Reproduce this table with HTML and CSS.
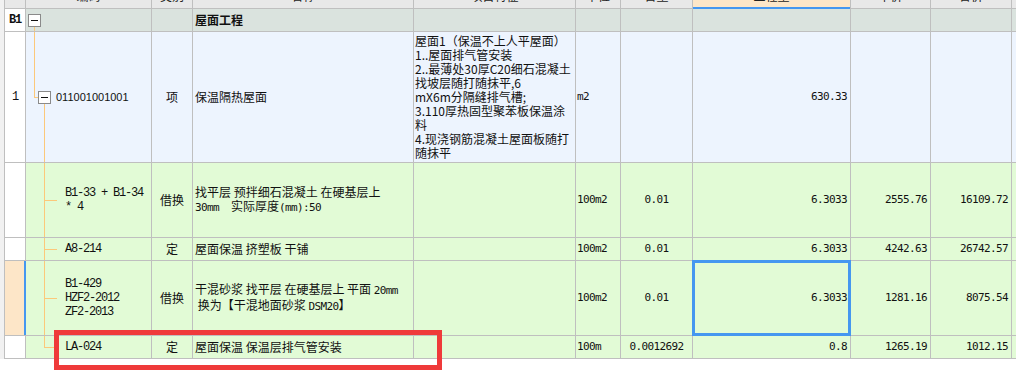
FILE: index.html
```html
<!DOCTYPE html>
<html lang="zh-CN">
<head>
<meta charset="utf-8">
<title>屋面工程</title>
<link rel="stylesheet" href="styles.css">
</head>
<body>
<div class="sheet">
  <div class="row head">
    <div class="c"></div>
    <div class="c ctr">编码</div>
    <div class="c ctr">类别</div>
    <div class="c ctr">名称</div>
    <div class="c ctr">项目特征</div>
    <div class="c ctr">单位</div>
    <div class="c ctr">含量</div>
    <div class="c ctr sel-head">工程量</div>
    <div class="c ctr">单价</div>
    <div class="c ctr">合价</div>
    <div class="c"></div>
  </div>

  <div class="row grp h22">
    <div class="c idx bold">B1</div>
    <div class="c tree-b1"><span class="box"></span></div>
    <div class="c"></div>
    <div class="c name strong">屋面工程</div>
    <div class="c"></div>
    <div class="c"></div>
    <div class="c"></div>
    <div class="c"></div>
    <div class="c"></div>
    <div class="c"></div>
    <div class="c"></div>
  </div>

  <div class="row item h130">
    <div class="c idx">1</div>
    <div class="c tree-item"><span class="box"></span><span class="bill">011001001001</span></div>
    <div class="c ctr">项</div>
    <div class="c name">保温隔热屋面</div>
    <div class="c desc"><div class="t">屋面1（保温不上人平屋面）<br>1..屋面排气管安装<br>2..最薄处30厚C20细石混凝土<br>找坡层随打随抹平,6<br>mX6m分隔缝排气槽;<br>3.110厚热固型聚苯板保温涂<br>料<br>4.现浇钢筋混凝土屋面板随打<br>随抹平</div></div>
    <div class="c unit">m2</div>
    <div class="c"></div>
    <div class="c num">630.33</div>
    <div class="c"></div>
    <div class="c"></div>
    <div class="c"></div>
  </div>

  <div class="row sub h74">
    <div class="c idx"></div>
    <div class="c code tree-mid"><div class="t">B1-33 + B1-34<br>* 4</div></div>
    <div class="c ctr">借换</div>
    <div class="c name"><div class="t">找平层 预拌细石混凝土 在硬基层上<br><span class="a">30mm  </span>实际厚度<span class="a">(mm):50</span></div></div>
    <div class="c"></div>
    <div class="c unit">100m2</div>
    <div class="c num ctr">0.01</div>
    <div class="c num">6.3033</div>
    <div class="c num">2555.76</div>
    <div class="c num">16109.72</div>
    <div class="c"></div>
  </div>

  <div class="row sub h22">
    <div class="c idx"></div>
    <div class="c code tree-mid">A8-214</div>
    <div class="c ctr">定</div>
    <div class="c name">屋面保温 挤塑板 干铺</div>
    <div class="c"></div>
    <div class="c unit">100m2</div>
    <div class="c num ctr">0.01</div>
    <div class="c num">6.3033</div>
    <div class="c num">4242.63</div>
    <div class="c num">26742.57</div>
    <div class="c"></div>
  </div>

  <div class="row sub h74">
    <div class="c idx cur"></div>
    <div class="c code tree-mid"><div class="t">B1-429<br>HZF2-2012<br>ZF2-2013</div></div>
    <div class="c ctr">借换</div>
    <div class="c name"><div class="t">干混砂浆 找平层 在硬基层上 平面 <span class="a">20mm</span><br> 换为【干混地面砂浆 <span class="a">DSM20</span>】</div></div>
    <div class="c"></div>
    <div class="c unit">100m2</div>
    <div class="c num ctr">0.01</div>
    <div class="c num focus">6.3033</div>
    <div class="c num">1281.16</div>
    <div class="c num">8075.54</div>
    <div class="c"></div>
  </div>

  <div class="row sub h22">
    <div class="c idx"></div>
    <div class="c code tree-end">LA-024</div>
    <div class="c ctr">定</div>
    <div class="c name">屋面保温 保温层排气管安装</div>
    <div class="c"></div>
    <div class="c unit">100m</div>
    <div class="c num ctr">0.0012692</div>
    <div class="c num">0.8</div>
    <div class="c num">1265.19</div>
    <div class="c num">1012.15</div>
    <div class="c"></div>
  </div>
</div>
<div class="mark"></div>
</body>
</html>
```

FILE: styles.css
```css
:root {
  --line: #bfbfbf;
  --tree: #fcc87a;
  --blue: #4597f0;
  --cjk: "Noto Sans CJK SC", sans-serif;
}

html, body {
  margin: 0;
  padding: 0;
  background: #ffffff;
}

body {
  position: relative;
  width: 1016px;
  height: 380px;
  overflow: hidden;
  font-family: var(--cjk);
  font-size: 12px;
  line-height: 14px;
  color: #111;
}

.sheet {
  display: flex;
  flex-direction: column;
  gap: 1px;
  width: 1011px;
  padding-left: 1px;
  padding-bottom: 1px;
  border-left: 4px solid #f1f1f1;
  background: var(--line);
}

.row {
  display: grid;
  grid-template-columns: 20px 125px 40px 220px 161px 44px 71px 157px 79px 80px 4px;
  column-gap: 1px;
}

.head { height: 8px; }
.h22 { height: 22px; }
.h74 { height: 74px; }
.h130 { height: 130px; }

.c {
  display: flex;
  align-items: center;
  overflow: hidden;
  white-space: pre;
  min-width: 0;
}

.t {
  white-space: pre;
  line-height: 14px;
}

.head .c {
  background-color: #e8e8e8;
  align-items: flex-end;
  padding-bottom: 5px;
  color: #222;
}

.grp .c { background-color: #dae3de; }
.item .c { background-color: #edf4fe; }
.sub .c { background-color: #e2fbd6; }

.row .idx {
  background-color: #ffffff;
  justify-content: center;
  font-family: "Liberation Mono", monospace;
  letter-spacing: -1.2px;
  font-size: 12px;
}

.row .idx.cur {
  background-color: #fde6c8;
  box-shadow: inset -1px 0 0 var(--blue), 1px 0 0 var(--blue);
}

.bold { font-weight: bold; }

.ctr { justify-content: center; }

.head .sel-head {
  background-color: #fde6c8;
  box-shadow: inset 0 -1px 0 var(--blue), 0 1px 0 var(--blue);
}

.name {
  padding-left: 2px;
}

.strong {
  font-weight: bold;
  font-size: 12px;
}

.desc {
  padding-left: 1px;
}

.unit {
  padding-left: 1px;
  font-family: "DejaVu Sans Mono", monospace;
  font-size: 11px;
  letter-spacing: -0.62px;
}

.num {
  justify-content: flex-end;
  padding-right: 3px;
  font-family: "DejaVu Sans Mono", monospace;
  font-size: 11px;
  letter-spacing: -0.62px;
}

.num.ctr {
  justify-content: center;
  padding-right: 0;
}

.a {
  font-family: "DejaVu Sans Mono", monospace;
  font-size: 11px;
  letter-spacing: -0.62px;
}

.focus {
  outline: 3px solid var(--blue);
  outline-offset: -2px;
}

.code {
  padding-left: 39px;
  font-family: "Liberation Mono", monospace;
  font-size: 12px;
  letter-spacing: -1.2px;
}

.box {
  position: relative;
  flex: none;
  width: 13px;
  height: 13px;
  box-sizing: border-box;
  border: 1px solid #8a8a8a;
  background: #ffffff;
}

.box::after {
  content: "";
  position: absolute;
  left: 2px;
  top: 5px;
  width: 7px;
  height: 1px;
  background: #111;
}

.bill {
  margin-left: 5px;
  font-family: "Liberation Sans", sans-serif;
  font-size: 11px;
  color: #111;
}

.tree-b1 {
  padding-left: 2px;
  background-image: linear-gradient(var(--tree), var(--tree));
  background-repeat: no-repeat;
  background-position: 8px 100%;
  background-size: 1px 50%;
}

.tree-item {
  padding-left: 12px;
  background-image:
    linear-gradient(var(--tree), var(--tree)),
    linear-gradient(var(--tree), var(--tree)),
    linear-gradient(var(--tree), var(--tree));
  background-repeat: no-repeat;
  background-position: 8px 0, 8px 50%, 18px 100%;
  background-size: 1px calc(50% + 1px), 5px 1px, 1px 50%;
}

.tree-mid {
  background-image:
    linear-gradient(var(--tree), var(--tree)),
    linear-gradient(var(--tree), var(--tree));
  background-repeat: no-repeat;
  background-position: 18px 0, 18px 50%;
  background-size: 1px 100%, 13px 1px;
}

.tree-end {
  background-image:
    linear-gradient(var(--tree), var(--tree)),
    linear-gradient(var(--tree), var(--tree));
  background-repeat: no-repeat;
  background-position: 18px 0, 18px 50%;
  background-size: 1px calc(50% + 1px), 13px 1px;
}

.mark {
  position: absolute;
  left: 54px;
  top: 330px;
  width: 388px;
  height: 40px;
  box-sizing: border-box;
  border: 5px solid #ef3a3a;
}
```
